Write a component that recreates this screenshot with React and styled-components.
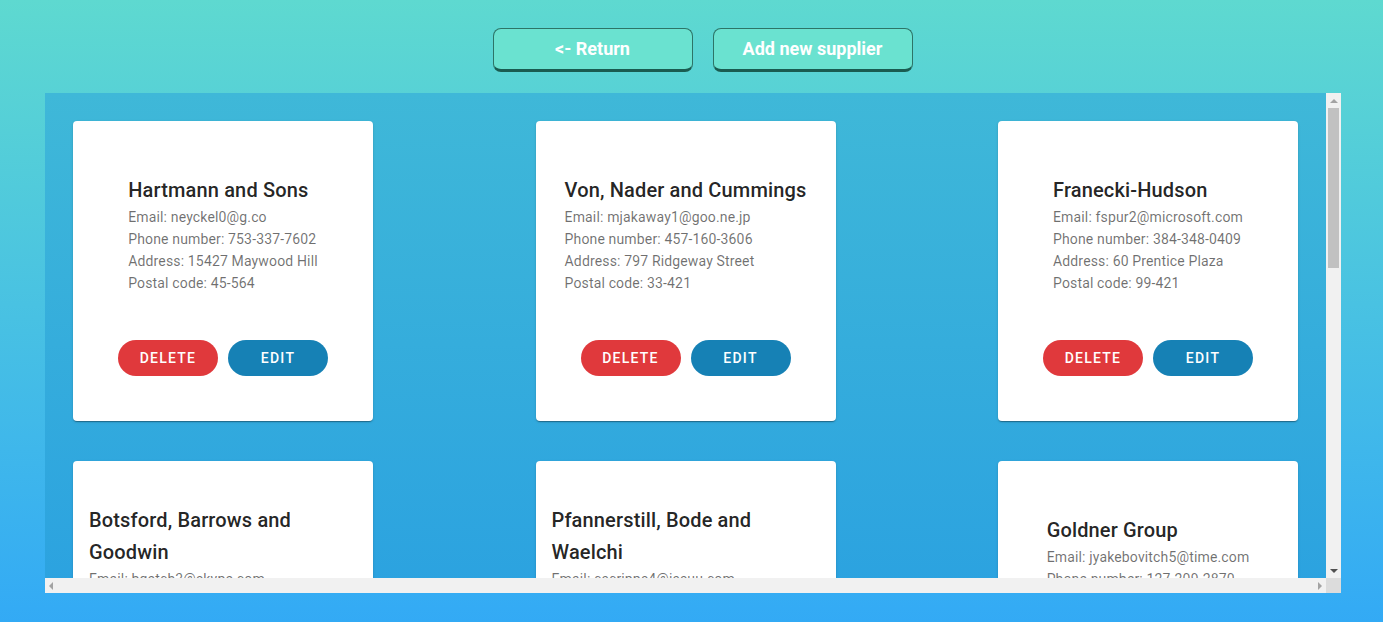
import React from 'react';
import styled, { createGlobalStyle } from 'styled-components';

const GlobalStyle = createGlobalStyle`
  html, body {
    margin: 0;
    padding: 0;
    height: 100%;
  }
  body {
    font-family: Roboto, "Liberation Sans", Arial, sans-serif;
    background: linear-gradient(180deg, #5ed9d0 0%, #33aaf5 100%);
    min-height: 622px;
    overflow: hidden;
  }
`;

const Page = styled.div`
  display: flex;
  flex-direction: column;
  padding-top: 28px;
`;

const Toolbar = styled.div`
  display: flex;
  justify-content: center;
  gap: 20px;
  padding-left: 22px;
  margin-bottom: 21px;
`;

const TopButton = styled.button`
  width: 200px;
  height: 44px;
  box-sizing: border-box;
  background: #6ae2d0;
  color: #fff;
  font-family: Roboto, "Liberation Sans", sans-serif;
  font-weight: 700;
  font-size: 18px;
  border: 1px solid #2d7467;
  border-bottom: 3px solid #1a5c51;
  border-radius: 8px;
  cursor: pointer;
  padding: 0 0 2px;
`;

const ListBox = styled.div`
  width: 1296px;
  height: 500px;
  margin: 0 42px 0 45px;
  display: grid;
  grid-template-columns: 1fr 15px;
  grid-template-rows: 1fr 15px;
  background: linear-gradient(180deg, #3fb8d8 0%, #2ba2e0 100%);
`;

const Viewport = styled.div`
  overflow: hidden;
  min-height: 0;
`;

const VTrack = styled.div`
  background: #f1f1f1;
  display: flex;
  flex-direction: column;
  align-items: center;
`;

const HTrack = styled.div`
  background: #f1f1f1;
  display: flex;
  align-items: center;
  justify-content: space-between;
  padding: 0 4px;
`;

const Corner = styled.div`
  background: #dcdcdc;
`;

const ArrowBox = styled.div`
  height: 15px;
  width: 15px;
  display: flex;
  align-items: center;
  justify-content: center;
`;

const Thumb = styled.div`
  width: 11px;
  height: 160px;
  background: #c1c1c1;
`;

const Spacer = styled.div`
  flex: 1;
`;

const Arrow = ({ dir, color }) => {
  const pts = {
    up: '0,4 4,0 8,4',
    down: '0,0 8,0 4,4',
    left: '4,0 4,8 0,4',
    right: '0,0 4,4 0,8',
  }[dir];
  const vertical = dir === 'up' || dir === 'down';
  return (
    <svg width={vertical ? 8 : 4} height={vertical ? 4 : 8} viewBox={vertical ? '0 0 8 4' : '0 0 4 8'}>
      <polygon points={pts} fill={color} />
    </svg>
  );
};

const Grid = styled.div`
  display: grid;
  grid-template-columns: repeat(3, 300px);
  justify-content: space-between;
  row-gap: 40px;
  padding: 28px;
`;

const Card = styled.div`
  width: 300px;
  height: 300px;
  box-sizing: border-box;
  padding: 2px 16px 0;
  background: #fff;
  border-radius: 4px;
  box-shadow: 0 2px 1px -1px rgba(0, 0, 0, 0.2), 0 1px 1px 0 rgba(0, 0, 0, 0.14),
    0 1px 3px 0 rgba(0, 0, 0, 0.12);
  display: flex;
  flex-direction: column;
  align-items: center;
  justify-content: space-evenly;
`;

const Info = styled.div`
  max-width: 100%;
  margin-top: 6px;
`;

const Name = styled.div`
  font-size: 20px;
  font-weight: 500;
  line-height: 32px;
  letter-spacing: 0.15px;
  color: rgba(0, 0, 0, 0.87);
`;

const Line = styled.div`
  font-size: 14px;
  line-height: 22px;
  letter-spacing: 0.15px;
  color: rgba(0, 0, 0, 0.56);
`;

const Actions = styled.div`
  display: flex;
  gap: 10px;
`;

const ActionButton = styled.button`
  width: 100px;
  height: 36px;
  border: none;
  border-radius: 18px;
  background: ${p => (p.$danger ? '#e0393c' : '#1681b5')};
  color: #fff;
  font-family: Roboto, "Liberation Sans", sans-serif;
  font-size: 14px;
  font-weight: 500;
  letter-spacing: 1.25px;
  text-transform: uppercase;
  cursor: pointer;
`;

const suppliers = [
  { name: 'Hartmann and Sons', email: 'neyckel0@g.co', phone: '753-337-7602', address: '15427 Maywood Hill', postal: '45-564' },
  { name: 'Von, Nader and Cummings', email: 'mjakaway1@goo.ne.jp', phone: '457-160-3606', address: '797 Ridgeway Street', postal: '33-421' },
  { name: 'Franecki-Hudson', email: 'fspur2@microsoft.com', phone: '384-348-0409', address: '60 Prentice Plaza', postal: '99-421' },
  { name: 'Botsford, Barrows and Goodwin', email: 'bgetch3@skype.com', phone: '612-508-4417', address: '3 Northland Court', postal: '12-704' },
  { name: 'Pfannerstill, Bode and Waelchi', email: 'cscripps4@issuu.com', phone: '219-775-0183', address: '41 Dayton Avenue', postal: '58-190' },
  { name: 'Goldner Group', email: 'jyakebovitch5@time.com', phone: '127-209-2870', address: '9 Sutteridge Lane', postal: '71-036' },
  { name: 'Kuhn LLC', email: 'mbrosel6@ted.com', phone: '845-411-2290', address: '58 Esch Junction', postal: '20-318' },
  { name: 'Ritchie-Lang', email: 'tolyet7@nih.gov', phone: '303-914-5521', address: '112 Fair Oaks Way', postal: '64-902' },
  { name: 'Schmitt Inc', email: 'ajarrad8@wired.com', phone: '502-677-3140', address: '7 Loftsgordon Park', postal: '37-455' },
  { name: 'Wuckert and Sons', email: 'dparr9@ebay.com', phone: '916-233-8071', address: '24 Harper Drive', postal: '81-627' },
  { name: 'Lakin Group', email: 'ghuttona@xing.com', phone: '714-590-6628', address: '880 Anhalt Center', postal: '15-283' },
  { name: 'Bergnaum-Reilly', email: 'kmoxb@psu.edu', phone: '260-118-4735', address: '3 Golf Course Hill', postal: '46-019' },
];

export default function App() {
  return (
    <>
      <GlobalStyle />
      <Page>
        <Toolbar>
          <TopButton>&lt;- Return</TopButton>
          <TopButton>Add new supplier</TopButton>
        </Toolbar>
        <ListBox>
          <Viewport>
            <Grid>
              {suppliers.map(s => (
                <Card key={s.email}>
                  <Info>
                    <Name>{s.name}</Name>
                    <Line>Email: {s.email}</Line>
                    <Line>Phone number: {s.phone}</Line>
                    <Line>Address: {s.address}</Line>
                    <Line>Postal code: {s.postal}</Line>
                  </Info>
                  <Actions>
                    <ActionButton $danger>Delete</ActionButton>
                    <ActionButton>Edit</ActionButton>
                  </Actions>
                </Card>
              ))}
            </Grid>
          </Viewport>
          <VTrack>
            <ArrowBox><Arrow dir="up" color="#a3a3a3" /></ArrowBox>
            <Thumb />
            <Spacer />
            <ArrowBox><Arrow dir="down" color="#505050" /></ArrowBox>
          </VTrack>
          <HTrack>
            <Arrow dir="left" color="#a3a3a3" />
            <Arrow dir="right" color="#a3a3a3" />
          </HTrack>
          <Corner />
        </ListBox>
      </Page>
    </>
  );
}
